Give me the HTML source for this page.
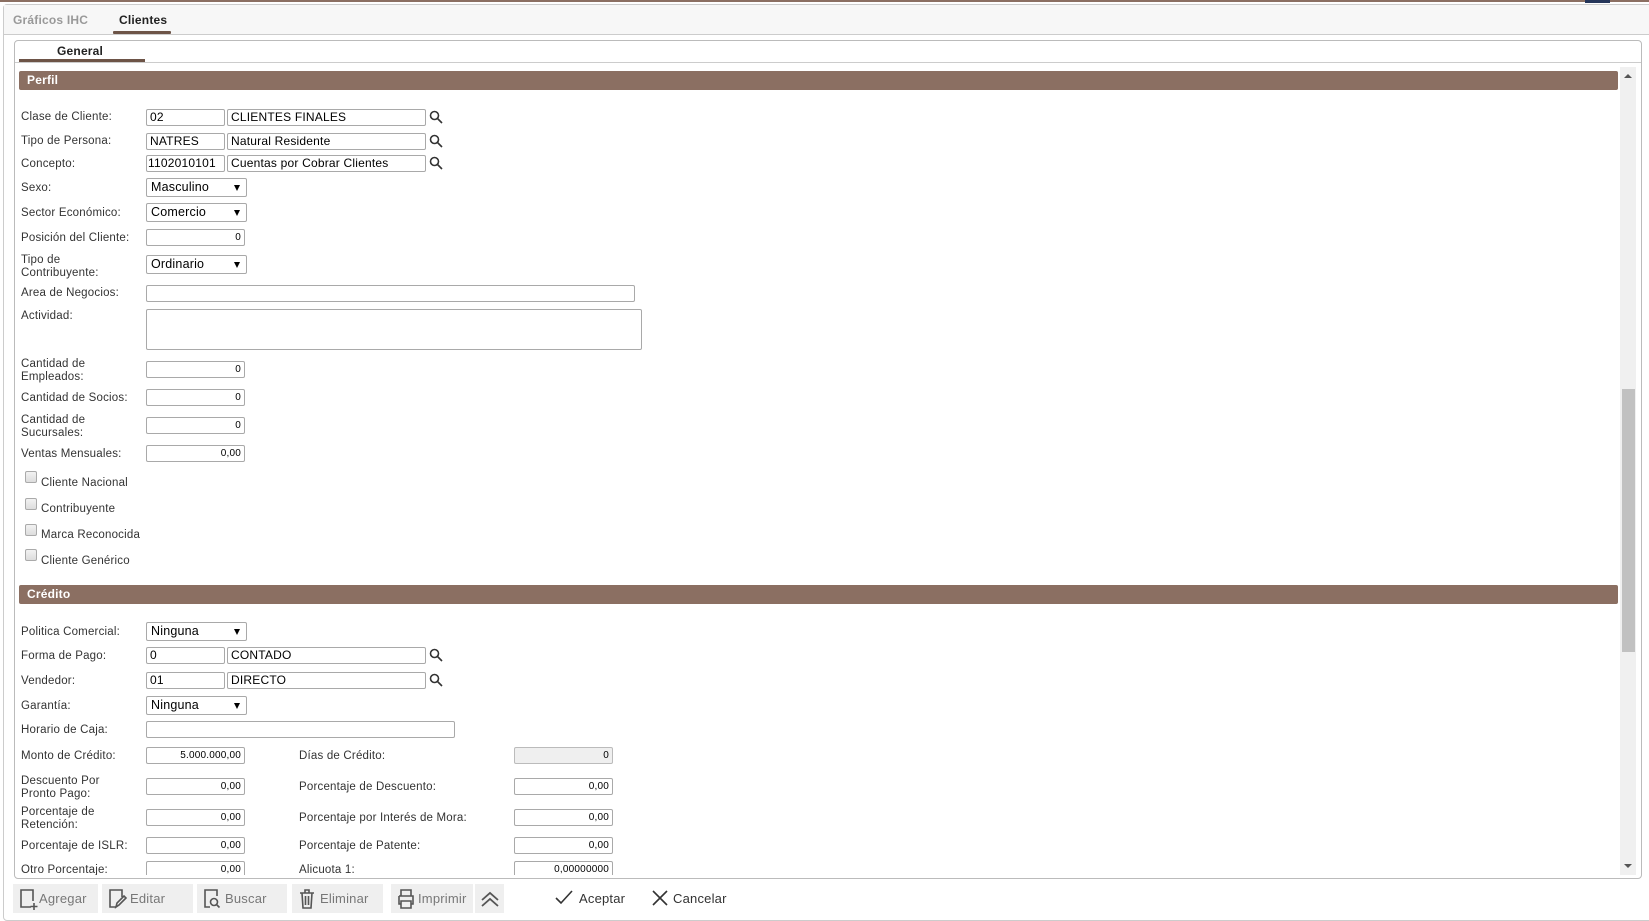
<!DOCTYPE html>
<html><head><meta charset="utf-8"><style>
*{box-sizing:border-box;margin:0;padding:0}
body{width:1649px;height:921px;background:#fff;font-family:"Liberation Sans","DejaVu Sans",sans-serif;font-size:12px;color:#333;position:relative;overflow:hidden;letter-spacing:.2px}
.a{position:absolute}
.lbl{position:absolute;left:21px;line-height:13px;font-size:11.5px;color:#333;margin-top:1px}
.in{position:absolute;height:17px;border:1px solid #a9a9a9;border-radius:2px;background:#fff;font-size:12px;line-height:15px;padding:0 3px;white-space:nowrap;overflow:hidden;color:#000;margin-top:1px}
.num{text-align:right;font-size:10px}
.sel{position:absolute;height:19px;width:101px;border:1px solid #a9a9a9;border-radius:2px;background:#fff;font-size:12.5px;line-height:17px;padding-left:4px;color:#000;margin-top:1px}
.sel:after{content:"";position:absolute;right:6px;top:6px;border-left:3.5px solid transparent;border-right:3.5px solid transparent;border-top:6px solid #000}
.bar{position:absolute;left:19px;width:1599px;height:19px;background:#8b6f62;color:#fff;font-weight:bold;font-size:12px;line-height:19px;padding-left:8px;border-radius:2px}
.cb{position:absolute;left:25px;width:12px;height:12px;border:1px solid #aaa;border-radius:2px;background:linear-gradient(#f2f2f2,#ddd)}
.cbl{position:absolute;left:41px;font-size:11.5px;margin-top:1px}
.btn{position:absolute;top:884px;height:29px;background:#efefef;color:#777;font-size:13px;line-height:29px}
.btn svg{position:absolute;left:4px;top:4px}
.btn span{position:absolute;left:28px}
</style></head><body>
<div class="a" style="left:0;top:0;width:1649px;height:2px;background:#8b6f62"></div>
<div class="a" style="left:1585px;top:0;width:25px;height:3px;background:#25365a"></div>
<div class="a" style="left:3px;top:4px;width:1650px;height:917px;border:1px solid #ccc;border-radius:4px;background:#fff"></div>
<div class="a" style="left:4px;top:5px;width:1650px;height:30px;background:#f7f7f7;border-bottom:1px solid #ccc"></div>
<div class="a" style="left:13px;top:13px;font-size:12px;font-weight:bold;color:#999">Gráficos IHC</div>
<div class="a" style="left:119px;top:13px;font-size:12px;font-weight:bold;color:#222">Clientes</div>
<div class="a" style="left:113px;top:31px;width:58px;height:3px;background:#6d5447;border-radius:1px"></div>
<div class="a" style="left:14px;top:40px;width:1628px;height:839px;border:1px solid #bbb;border-radius:4px"></div>
<div class="a" style="left:15px;top:62px;width:1626px;height:1px;background:#ccc"></div>
<div class="a" style="left:57px;top:44px;font-size:12px;font-weight:bold;color:#222">General</div>
<div class="a" style="left:19px;top:59px;width:126px;height:3px;background:#6d5447"></div>
<div class="a" style="left:1620px;top:67px;width:16px;height:808px;background:#f0f0f0"></div>
<div class="a" style="left:1622px;top:389px;width:13px;height:263px;background:#c1c1c1"></div>
<div class="a" style="left:1624px;top:74px;border-left:4px solid transparent;border-right:4px solid transparent;border-bottom:4px solid #555"></div>
<div class="a" style="left:1624px;top:864px;border-left:4px solid transparent;border-right:4px solid transparent;border-top:4px solid #555"></div>

<div class="bar" style="top:71px">Perfil</div>
<div class="lbl" style="top:110px">Clase de Cliente:</div>
<div class="in" style="left:146px;top:108px;width:79px">02</div>
<div class="in" style="left:227px;top:108px;width:199px">CLIENTES FINALES</div>
<div class="lbl" style="top:134px">Tipo de Persona:</div>
<div class="in" style="left:146px;top:132px;width:79px">NATRES</div>
<div class="in" style="left:227px;top:132px;width:199px">Natural Residente</div>
<div class="lbl" style="top:157px">Concepto:</div>
<div class="in" style="left:146px;top:154px;width:79px;padding-left:1px">1102010101</div>
<div class="in" style="left:227px;top:154px;width:199px">Cuentas por Cobrar Clientes</div>
<div class="lbl" style="top:181px">Sexo:</div>
<div class="sel" style="left:146px;top:177px">Masculino</div>
<div class="lbl" style="top:206px">Sector Económico:</div>
<div class="sel" style="left:146px;top:202px">Comercio</div>
<div class="lbl" style="top:231px">Posición del Cliente:</div>
<div class="in num" style="left:146px;top:228px;width:99px">0</div>
<div class="lbl" style="top:253px">Tipo de<br>Contribuyente:</div>
<div class="sel" style="left:146px;top:254px">Ordinario</div>
<div class="lbl" style="top:286px">Area de Negocios:</div>
<div class="in" style="left:146px;top:284px;width:489px"></div>
<div class="lbl" style="top:309px">Actividad:</div>
<div class="in" style="left:146px;top:308px;width:496px;height:41px"></div>
<div class="lbl" style="top:357px">Cantidad de<br>Empleados:</div>
<div class="in num" style="left:146px;top:360px;width:99px">0</div>
<div class="lbl" style="top:391px">Cantidad de Socios:</div>
<div class="in num" style="left:146px;top:388px;width:99px">0</div>
<div class="lbl" style="top:413px">Cantidad de<br>Sucursales:</div>
<div class="in num" style="left:146px;top:416px;width:99px">0</div>
<div class="lbl" style="top:447px">Ventas Mensuales:</div>
<div class="in num" style="left:146px;top:444px;width:99px">0,00</div>
<div class="cb" style="top:471px"></div><div class="cbl" style="top:476px">Cliente Nacional</div>
<div class="cb" style="top:498px"></div><div class="cbl" style="top:502px">Contribuyente</div>
<div class="cb" style="top:524px"></div><div class="cbl" style="top:528px">Marca Reconocida</div>
<div class="cb" style="top:549px"></div><div class="cbl" style="top:554px">Cliente Genérico</div>

<div class="bar" style="top:585px">Crédito</div>
<div class="lbl" style="top:625px">Politica Comercial:</div>
<div class="sel" style="left:146px;top:621px">Ninguna</div>
<div class="lbl" style="top:649px">Forma de Pago:</div>
<div class="in" style="left:146px;top:646px;width:79px">0</div>
<div class="in" style="left:227px;top:646px;width:199px">CONTADO</div>
<div class="lbl" style="top:674px">Vendedor:</div>
<div class="in" style="left:146px;top:671px;width:79px">01</div>
<div class="in" style="left:227px;top:671px;width:199px">DIRECTO</div>
<div class="lbl" style="top:699px">Garantía:</div>
<div class="sel" style="left:146px;top:695px">Ninguna</div>
<div class="lbl" style="top:723px">Horario de Caja:</div>
<div class="in" style="left:146px;top:720px;width:309px"></div>
<div class="lbl" style="top:749px">Monto de Crédito:</div>
<div class="in num" style="left:146px;top:746px;width:99px">5.000.000,00</div>
<div class="lbl" style="left:299px;top:749px">Días de Crédito:</div>
<div class="in num" style="left:514px;top:746px;width:99px;background:#efefef;border-color:#bbb">0</div>
<div class="lbl" style="top:774px">Descuento Por<br>Pronto Pago:</div>
<div class="in num" style="left:146px;top:777px;width:99px">0,00</div>
<div class="lbl" style="left:299px;top:780px">Porcentaje de Descuento:</div>
<div class="in num" style="left:514px;top:777px;width:99px">0,00</div>
<div class="lbl" style="top:805px">Porcentaje de<br>Retención:</div>
<div class="in num" style="left:146px;top:808px;width:99px">0,00</div>
<div class="lbl" style="left:299px;top:811px">Porcentaje por Interés de Mora:</div>
<div class="in num" style="left:514px;top:808px;width:99px">0,00</div>
<div class="lbl" style="top:839px">Porcentaje de ISLR:</div>
<div class="in num" style="left:146px;top:836px;width:99px">0,00</div>
<div class="lbl" style="left:299px;top:839px">Porcentaje de Patente:</div>
<div class="in num" style="left:514px;top:836px;width:99px">0,00</div>
<div class="a" style="left:15px;top:860px;width:1600px;height:15px;overflow:hidden">
<div class="lbl" style="left:6px;top:3px">Otro Porcentaje:</div>
<div class="in num" style="left:131px;top:0;width:99px">0,00</div>
<div class="lbl" style="left:284px;top:3px">Alicuota 1:</div>
<div class="in num" style="left:499px;top:0;width:99px">0,00000000</div>
</div>

<svg class="a" style="left:429px;top:110px" width="15" height="120" viewBox="0 0 15 120" fill="none" stroke="#333" stroke-width="1.6">
<circle cx="5.5" cy="5.5" r="4"/><path d="M8.5 8.5l4.5 4.5"/>
<g transform="translate(0,24)"><circle cx="5.5" cy="5.5" r="4"/><path d="M8.5 8.5l4.5 4.5"/></g>
<g transform="translate(0,46)"><circle cx="5.5" cy="5.5" r="4"/><path d="M8.5 8.5l4.5 4.5"/></g>
</svg>
<svg class="a" style="left:429px;top:648px" width="15" height="40" viewBox="0 0 15 40" fill="none" stroke="#333" stroke-width="1.6">
<circle cx="5.5" cy="5.5" r="4"/><path d="M8.5 8.5l4.5 4.5"/>
<g transform="translate(0,25)"><circle cx="5.5" cy="5.5" r="4"/><path d="M8.5 8.5l4.5 4.5"/></g>
</svg>

<div class="btn" style="left:13px;width:85px"><svg width="22" height="22" fill="none" stroke="#555" stroke-width="1.6"><path d="M14 19H4V2h12v11"/><path d="M17 15v7M13.5 18.5h7"/></svg><span style="left:26px">Agregar</span></div>
<div class="btn" style="left:102px;width:91px"><svg width="22" height="22" fill="none" stroke="#555" stroke-width="1.6"><path d="M10 19H4V2h12v7"/><path d="M10 19l1-4 7-7 2 2-7 7z"/></svg><span>Editar</span></div>
<div class="btn" style="left:197px;width:90px"><svg width="22" height="22" fill="none" stroke="#555" stroke-width="1.6"><path d="M9 19H4V2h12v6"/><circle cx="13" cy="14" r="3.5"/><path d="M15.5 16.5l3 3"/></svg><span>Buscar</span></div>
<div class="btn" style="left:292px;width:91px"><svg width="22" height="22" fill="none" stroke="#555" stroke-width="1.6"><path d="M4 5h14M9 5V2h4v3M6 5l1 15h8l1-15M9.5 8v9M12.5 8v9"/></svg><span>Eliminar</span></div>
<div class="btn" style="left:391px;width:82px"><svg width="22" height="22" fill="none" stroke="#555" stroke-width="1.6"><path d="M6 8V2h10v6M4 8h14v8h-2M6 16H4V8M6 13h10v7H6z"/></svg><span style="left:27px">Imprimir</span></div>
<div class="btn" style="left:475px;width:29px"><svg width="22" height="22" fill="none" stroke="#555" stroke-width="1.8"><path d="M3 12l8-7 8 7M3 18l8-7 8 7"/></svg></div>
<svg class="a" style="left:555px;top:890px" width="18" height="16" fill="none" stroke="#333" stroke-width="1.6"><path d="M1 8l5 5L17 1"/></svg>
<div class="a" style="left:579px;top:891px;font-size:13px;color:#333">Aceptar</div>
<svg class="a" style="left:652px;top:890px" width="16" height="16" fill="none" stroke="#333" stroke-width="1.6"><path d="M1 1l14 14M15 1L1 15"/></svg>
<div class="a" style="left:673px;top:891px;font-size:13px;color:#333">Cancelar</div>
</body></html>
